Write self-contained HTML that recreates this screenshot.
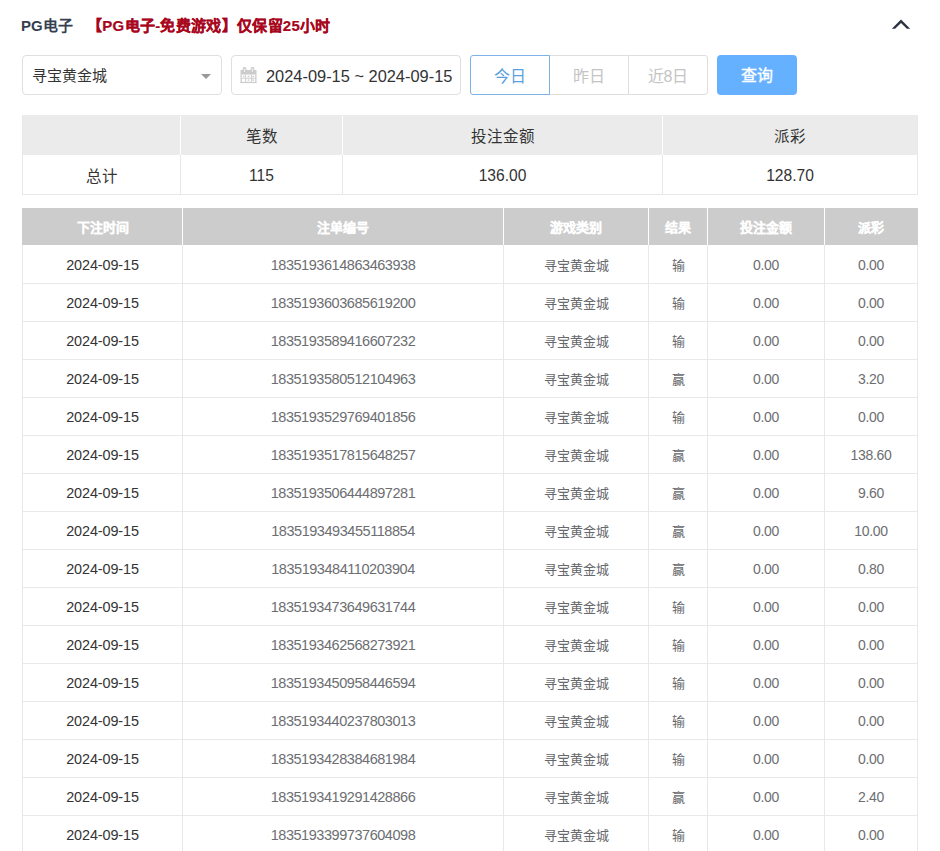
<!DOCTYPE html>
<html lang="zh-CN"><head><meta charset="utf-8">
<style>
*{box-sizing:border-box;margin:0;padding:0}
html,body{width:940px;height:851px;overflow:hidden;background:#fff}
body{font-family:"Liberation Sans",sans-serif;color:#606266;position:relative}
.t1{position:absolute;left:21px;top:11px;font-size:15px;font-weight:bold;color:#353f50;line-height:30px;white-space:nowrap}
.t2{position:absolute;left:87px;top:11px;font-size:15px;font-weight:bold;color:#a8061c;line-height:30px;letter-spacing:.3px;-webkit-text-stroke:.2px #a8061c;white-space:nowrap}
.chev{position:absolute;left:889px;top:15px;width:24px;height:16px}
.sel{position:absolute;left:22px;top:55px;width:200px;height:40px;border:1px solid #dfdfdf;border-radius:4px}
.sel span{position:absolute;left:9px;top:5px;font-size:15px;color:#333;line-height:30px;white-space:nowrap}
.caret{position:absolute;left:178px;top:18px;width:0;height:0;border-left:5px solid transparent;border-right:5px solid transparent;border-top:5px solid #999}
.dp{position:absolute;left:231px;top:55px;width:230px;height:40px;border:1px solid #dfdfdf;border-radius:4px}
.dp svg{position:absolute;left:8px;top:11px}
.dp span{position:absolute;left:34px;top:5px;font-size:16.4px;color:#333;line-height:30px;white-space:nowrap}
.bg{position:absolute;left:470px;top:55px;height:40px}
.bt{position:absolute;top:0;width:80px;height:40px;border:1px solid #dedede;font-size:16px;color:#c4c4c4;text-align:center;line-height:41px;background:#fff;white-space:nowrap}
.bt.on{border-color:#7db3e6;color:#5a9fe0;z-index:2}
.b1{left:0;border-radius:3px 0 0 3px} .b2{left:79px} .b3{left:158px;border-radius:0 3px 3px 0}
.q{position:absolute;left:717px;top:55px;width:80px;height:40px;border-radius:4px;background:#66b1ff;color:#fff;font-size:16px;font-weight:normal;-webkit-text-stroke:.35px #fff;text-align:center;line-height:42px}
.c{position:absolute;display:flex;align-items:center;justify-content:center;white-space:nowrap}
.sh{position:absolute;left:22px;top:115px;width:896px;height:40px;background:#ebebeb}
.swsep{position:absolute;top:115px;width:1px;height:40px;background:#fff}
.svsep{position:absolute;top:155px;width:1px;height:39px;background:#e8e8e8}
.sbox{position:absolute;left:22px;top:115px;width:896px;height:80px;border:1px solid #e8e8e8;border-top-color:#ebebeb}
.sc{font-size:15.5px;color:#333}
.sn{font-size:15.6px;padding-top:3px}
.dh{position:absolute;left:22px;top:208px;width:896px;height:37px;background:#cccccc}
.wsep{position:absolute;top:208px;width:1px;height:37px;background:#fff}
.vsep{position:absolute;top:245px;width:1px;height:606px;background:#e8e8e8}
.rb{position:absolute;left:22px;width:896px;height:1px;background:#e8e8e8}
.h{color:#fff;font-size:13px;font-weight:bold;-webkit-text-stroke:.2px #fff}
.d{font-size:14.4px;letter-spacing:-0.1px;color:#333}
.o{font-size:14.5px;letter-spacing:-0.45px;color:#6c6e72}
.g,.r{font-size:13px;color:#66686c}
.a{font-size:14px;letter-spacing:-0.3px;color:#6c6e72}
</style></head><body>
<div class="t1">PG电子</div>
<div class="t2">【PG电子-免费游戏】仅保留25小时</div>
<svg class="chev" viewBox="0 0 24 16"><path d="M12 4.4 L2.8 13.8 L6.1 13.8 L12 7.9 L17.9 13.8 L21.2 13.8 Z" fill="#2b3343"/></svg>
<div class="sel"><span>寻宝黄金城</span><i class="caret"></i></div>
<div class="dp"><svg width="17" height="17" viewBox="0 0 17 17"><g fill="#cdcdcd"><rect x="0.5" y="3" width="16" height="4.6"/><rect x="0.5" y="7.6" width="1.3" height="8.4"/><rect x="15.2" y="7.6" width="1.3" height="8.4"/><rect x="0.5" y="14.8" width="16" height="1.3"/><rect x="1.8" y="10.8" width="13.4" height="0.9"/><rect x="5.2" y="7.6" width="0.9" height="7.2"/><rect x="10.9" y="7.6" width="0.9" height="7.2"/><rect x="3" y="8.8" width="1.6" height="1.4"/><rect x="7.7" y="8.8" width="1.6" height="1.4"/><rect x="12.4" y="8.8" width="1.6" height="1.4"/><rect x="7.7" y="12.4" width="1.6" height="1.4"/><rect x="12.4" y="12.4" width="1.6" height="1.4"/></g><g fill="#eee" stroke="#c8c8c8" stroke-width="1.1"><rect x="3.2" y="0.6" width="2.6" height="5.2" rx="1.3"/><rect x="11.2" y="0.6" width="2.6" height="5.2" rx="1.3"/></g></svg><span>2024-09-15 ~ 2024-09-15</span></div>
<div class="bg"><div class="bt b1 on">今日</div><div class="bt b2">昨日</div><div class="bt b3">近8日</div></div>
<div class="q">查询</div>
<div class="sh"></div><div class="swsep" style="left:180px"></div><div class="svsep" style="left:180px"></div><div class="swsep" style="left:342px"></div><div class="svsep" style="left:342px"></div><div class="swsep" style="left:662px"></div><div class="svsep" style="left:662px"></div><div class="sbox"></div><div class="c sc" style="left:23px;width:157px;top:115px;height:40px"></div><div class="c sc" style="left:181px;width:161px;top:115px;height:40px">笔数</div><div class="c sc" style="left:343px;width:319px;top:115px;height:40px">投注金额</div><div class="c sc" style="left:663px;width:254px;top:115px;height:40px">派彩</div><div class="c sc" style="left:23px;width:157px;top:155px;height:39px">总计</div><div class="c sc sn" style="left:181px;width:161px;top:155px;height:39px">115</div><div class="c sc sn" style="left:343px;width:319px;top:155px;height:39px">136.00</div><div class="c sc sn" style="left:663px;width:254px;top:155px;height:39px">128.70</div>
<div class="dh"></div><div class="wsep" style="left:182px"></div><div class="wsep" style="left:503px"></div><div class="wsep" style="left:648px"></div><div class="wsep" style="left:707px"></div><div class="wsep" style="left:824px"></div><div class="c h" style="left:23px;width:159px;top:208px;height:37px">下注时间</div><div class="c h" style="left:183px;width:320px;top:208px;height:37px">注单编号</div><div class="c h" style="left:504px;width:144px;top:208px;height:37px">游戏类别</div><div class="c h" style="left:649px;width:58px;top:208px;height:37px">结果</div><div class="c h" style="left:708px;width:116px;top:208px;height:37px">投注金额</div><div class="c h" style="left:825px;width:92px;top:208px;height:37px">派彩</div><div class="rb" style="top:283px"></div><div class="c d" style="left:23px;width:159px;top:246px;height:37px">2024-09-15</div><div class="c o" style="left:183px;width:320px;top:246px;height:37px">1835193614863463938</div><div class="c g" style="left:504px;width:144px;top:246px;height:37px">寻宝黄金城</div><div class="c r" style="left:649px;width:58px;top:246px;height:37px">输</div><div class="c a" style="left:708px;width:116px;top:246px;height:37px">0.00</div><div class="c a" style="left:825px;width:92px;top:246px;height:37px">0.00</div><div class="rb" style="top:321px"></div><div class="c d" style="left:23px;width:159px;top:284px;height:37px">2024-09-15</div><div class="c o" style="left:183px;width:320px;top:284px;height:37px">1835193603685619200</div><div class="c g" style="left:504px;width:144px;top:284px;height:37px">寻宝黄金城</div><div class="c r" style="left:649px;width:58px;top:284px;height:37px">输</div><div class="c a" style="left:708px;width:116px;top:284px;height:37px">0.00</div><div class="c a" style="left:825px;width:92px;top:284px;height:37px">0.00</div><div class="rb" style="top:359px"></div><div class="c d" style="left:23px;width:159px;top:322px;height:37px">2024-09-15</div><div class="c o" style="left:183px;width:320px;top:322px;height:37px">1835193589416607232</div><div class="c g" style="left:504px;width:144px;top:322px;height:37px">寻宝黄金城</div><div class="c r" style="left:649px;width:58px;top:322px;height:37px">输</div><div class="c a" style="left:708px;width:116px;top:322px;height:37px">0.00</div><div class="c a" style="left:825px;width:92px;top:322px;height:37px">0.00</div><div class="rb" style="top:397px"></div><div class="c d" style="left:23px;width:159px;top:360px;height:37px">2024-09-15</div><div class="c o" style="left:183px;width:320px;top:360px;height:37px">1835193580512104963</div><div class="c g" style="left:504px;width:144px;top:360px;height:37px">寻宝黄金城</div><div class="c r" style="left:649px;width:58px;top:360px;height:37px">赢</div><div class="c a" style="left:708px;width:116px;top:360px;height:37px">0.00</div><div class="c a" style="left:825px;width:92px;top:360px;height:37px">3.20</div><div class="rb" style="top:435px"></div><div class="c d" style="left:23px;width:159px;top:398px;height:37px">2024-09-15</div><div class="c o" style="left:183px;width:320px;top:398px;height:37px">1835193529769401856</div><div class="c g" style="left:504px;width:144px;top:398px;height:37px">寻宝黄金城</div><div class="c r" style="left:649px;width:58px;top:398px;height:37px">输</div><div class="c a" style="left:708px;width:116px;top:398px;height:37px">0.00</div><div class="c a" style="left:825px;width:92px;top:398px;height:37px">0.00</div><div class="rb" style="top:473px"></div><div class="c d" style="left:23px;width:159px;top:436px;height:37px">2024-09-15</div><div class="c o" style="left:183px;width:320px;top:436px;height:37px">1835193517815648257</div><div class="c g" style="left:504px;width:144px;top:436px;height:37px">寻宝黄金城</div><div class="c r" style="left:649px;width:58px;top:436px;height:37px">赢</div><div class="c a" style="left:708px;width:116px;top:436px;height:37px">0.00</div><div class="c a" style="left:825px;width:92px;top:436px;height:37px">138.60</div><div class="rb" style="top:511px"></div><div class="c d" style="left:23px;width:159px;top:474px;height:37px">2024-09-15</div><div class="c o" style="left:183px;width:320px;top:474px;height:37px">1835193506444897281</div><div class="c g" style="left:504px;width:144px;top:474px;height:37px">寻宝黄金城</div><div class="c r" style="left:649px;width:58px;top:474px;height:37px">赢</div><div class="c a" style="left:708px;width:116px;top:474px;height:37px">0.00</div><div class="c a" style="left:825px;width:92px;top:474px;height:37px">9.60</div><div class="rb" style="top:549px"></div><div class="c d" style="left:23px;width:159px;top:512px;height:37px">2024-09-15</div><div class="c o" style="left:183px;width:320px;top:512px;height:37px">1835193493455118854</div><div class="c g" style="left:504px;width:144px;top:512px;height:37px">寻宝黄金城</div><div class="c r" style="left:649px;width:58px;top:512px;height:37px">赢</div><div class="c a" style="left:708px;width:116px;top:512px;height:37px">0.00</div><div class="c a" style="left:825px;width:92px;top:512px;height:37px">10.00</div><div class="rb" style="top:587px"></div><div class="c d" style="left:23px;width:159px;top:550px;height:37px">2024-09-15</div><div class="c o" style="left:183px;width:320px;top:550px;height:37px">1835193484110203904</div><div class="c g" style="left:504px;width:144px;top:550px;height:37px">寻宝黄金城</div><div class="c r" style="left:649px;width:58px;top:550px;height:37px">赢</div><div class="c a" style="left:708px;width:116px;top:550px;height:37px">0.00</div><div class="c a" style="left:825px;width:92px;top:550px;height:37px">0.80</div><div class="rb" style="top:625px"></div><div class="c d" style="left:23px;width:159px;top:588px;height:37px">2024-09-15</div><div class="c o" style="left:183px;width:320px;top:588px;height:37px">1835193473649631744</div><div class="c g" style="left:504px;width:144px;top:588px;height:37px">寻宝黄金城</div><div class="c r" style="left:649px;width:58px;top:588px;height:37px">输</div><div class="c a" style="left:708px;width:116px;top:588px;height:37px">0.00</div><div class="c a" style="left:825px;width:92px;top:588px;height:37px">0.00</div><div class="rb" style="top:663px"></div><div class="c d" style="left:23px;width:159px;top:626px;height:37px">2024-09-15</div><div class="c o" style="left:183px;width:320px;top:626px;height:37px">1835193462568273921</div><div class="c g" style="left:504px;width:144px;top:626px;height:37px">寻宝黄金城</div><div class="c r" style="left:649px;width:58px;top:626px;height:37px">输</div><div class="c a" style="left:708px;width:116px;top:626px;height:37px">0.00</div><div class="c a" style="left:825px;width:92px;top:626px;height:37px">0.00</div><div class="rb" style="top:701px"></div><div class="c d" style="left:23px;width:159px;top:664px;height:37px">2024-09-15</div><div class="c o" style="left:183px;width:320px;top:664px;height:37px">1835193450958446594</div><div class="c g" style="left:504px;width:144px;top:664px;height:37px">寻宝黄金城</div><div class="c r" style="left:649px;width:58px;top:664px;height:37px">输</div><div class="c a" style="left:708px;width:116px;top:664px;height:37px">0.00</div><div class="c a" style="left:825px;width:92px;top:664px;height:37px">0.00</div><div class="rb" style="top:739px"></div><div class="c d" style="left:23px;width:159px;top:702px;height:37px">2024-09-15</div><div class="c o" style="left:183px;width:320px;top:702px;height:37px">1835193440237803013</div><div class="c g" style="left:504px;width:144px;top:702px;height:37px">寻宝黄金城</div><div class="c r" style="left:649px;width:58px;top:702px;height:37px">输</div><div class="c a" style="left:708px;width:116px;top:702px;height:37px">0.00</div><div class="c a" style="left:825px;width:92px;top:702px;height:37px">0.00</div><div class="rb" style="top:777px"></div><div class="c d" style="left:23px;width:159px;top:740px;height:37px">2024-09-15</div><div class="c o" style="left:183px;width:320px;top:740px;height:37px">1835193428384681984</div><div class="c g" style="left:504px;width:144px;top:740px;height:37px">寻宝黄金城</div><div class="c r" style="left:649px;width:58px;top:740px;height:37px">输</div><div class="c a" style="left:708px;width:116px;top:740px;height:37px">0.00</div><div class="c a" style="left:825px;width:92px;top:740px;height:37px">0.00</div><div class="rb" style="top:815px"></div><div class="c d" style="left:23px;width:159px;top:778px;height:37px">2024-09-15</div><div class="c o" style="left:183px;width:320px;top:778px;height:37px">1835193419291428866</div><div class="c g" style="left:504px;width:144px;top:778px;height:37px">寻宝黄金城</div><div class="c r" style="left:649px;width:58px;top:778px;height:37px">赢</div><div class="c a" style="left:708px;width:116px;top:778px;height:37px">0.00</div><div class="c a" style="left:825px;width:92px;top:778px;height:37px">2.40</div><div class="rb" style="top:853px"></div><div class="c d" style="left:23px;width:159px;top:816px;height:37px">2024-09-15</div><div class="c o" style="left:183px;width:320px;top:816px;height:37px">1835193399737604098</div><div class="c g" style="left:504px;width:144px;top:816px;height:37px">寻宝黄金城</div><div class="c r" style="left:649px;width:58px;top:816px;height:37px">输</div><div class="c a" style="left:708px;width:116px;top:816px;height:37px">0.00</div><div class="c a" style="left:825px;width:92px;top:816px;height:37px">0.00</div><div class="vsep" style="left:22px"></div><div class="vsep" style="left:182px"></div><div class="vsep" style="left:503px"></div><div class="vsep" style="left:648px"></div><div class="vsep" style="left:707px"></div><div class="vsep" style="left:824px"></div><div class="vsep" style="left:917px"></div>
</body></html>
